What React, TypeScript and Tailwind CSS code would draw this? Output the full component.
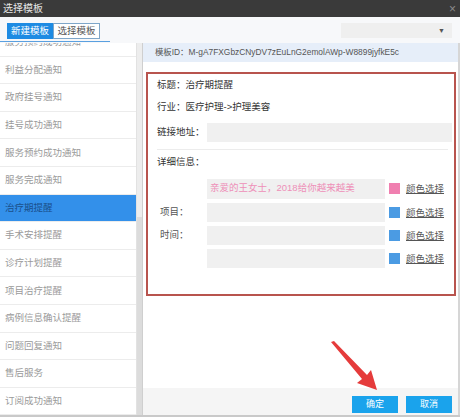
import React from 'react';

const items = [
  '服务预约成功通知',
  '利益分配通知',
  '政府挂号通知',
  '挂号成功通知',
  '服务预约成功通知',
  '服务完成通知',
  '治疗期提醒',
  '手术安排提醒',
  '诊疗计划提醒',
  '项目治疗提醒',
  '病例信息确认提醒',
  '问题回复通知',
  '售后服务',
  '订阅成功通知',
];

const ColorPick = ({ color }: { color: string }) => (
  <div className="flex items-center ml-[4px]">
    <div className={`w-[11px] h-[11px] ${color}`}></div>
    <span className="ml-[6px] text-[9.5px] text-[#555] underline leading-none">颜色选择</span>
  </div>
);

const App = () => {
  return (
    <div
      className="relative w-[460px] h-[417px] flex flex-col bg-white overflow-hidden"
      style={{ fontFamily: '"Liberation Sans", "Noto Sans CJK SC", sans-serif' }}
    >
      {/* title bar */}
      <div className="h-[17px] bg-[#3a3a3a] flex items-center justify-between pl-[3px] pr-[4px]">
        <span className="text-[10px] text-[#e6e6e6] leading-none">选择模板</span>
        <span className="text-[12px] text-[#8a8a8a] leading-none">×</span>
      </div>

      {/* tabs row */}
      <div className="h-[26px] bg-[#f7f8fa] flex items-start justify-between pl-[7px] pr-[8px] pt-[6px] relative">
        <div className="flex">
          <div className="w-[46px] h-[16px] bg-[#1e8be3] text-white text-[9.5px] flex items-center justify-center">新建模板</div>
          <div className="w-[47px] h-[16px] bg-white border border-[#7ea6c9] text-[#555] text-[9.5px] flex items-center justify-center">选择模板</div>
        </div>
        <div className="w-[111px] h-[15px] bg-[#efefef] flex items-center justify-end pr-[7px]">
          <span className="text-[7px] text-[#555] leading-none">▼</span>
        </div>
        <div className="absolute left-0 bottom-[1px] w-[110px] h-px bg-[#5aa0e0]"></div>
      </div>

      <div className="flex-1 flex min-h-0 border-b-2 border-[#c9c9c9]">
        {/* sidebar */}
        <div className="w-[143px] flex shrink-0">
          <div className="w-[137px] overflow-hidden border-r border-[#e2e2e2]">
            <div className="mt-[-14px]">
              {items.map((it, i) => (
                <div
                  key={i}
                  className={`h-[27.6px] flex items-center pl-[5px] text-[9.5px] border-b border-[#ececec] ${
                    it === '治疗期提醒' ? 'bg-[#3390ea] text-[#1a4f8a]' : 'text-[#9a9a9a]'
                  }`}
                >
                  {it}
                </div>
              ))}
            </div>
          </div>
          <div className="w-[6px] bg-[#ededed] border-r border-[#cfcfcf] flex flex-col">
            <div className="h-[174px]"></div>
            <div className="flex-1 bg-[#dcdcdc]"></div>
          </div>
        </div>

        {/* main */}
        <div className="flex-1 flex flex-col border-r-2 border-[#d6d6d6]">
          <div className="h-[19px] bg-[#e6eef9] flex items-center pl-[12px] text-[8.4px] text-[#555] whitespace-nowrap">
            模板ID：M-gA7FXGbzCNyDV7zEuLnG2emolAWp-W8899jyfkE5c
          </div>

          <div className="flex-1 pt-[10px] pl-[3px] pr-[2px]">
            <div className="h-[224px] border-2 border-[#b8544e] pl-[9px] pr-[2px]">
              <div className="h-[20px] mt-[1px] flex items-center text-[9.5px] text-[#333]">标题：治疗期提醒</div>
              <div className="h-[24px] flex items-center text-[9.5px] text-[#333]">行业：医疗护理-&gt;护理美容</div>
              <div className="h-[26px] flex items-center text-[9.5px] text-[#333]">
                <span className="w-[50px]">链接地址：</span>
                <div className="flex-1 h-[19px] bg-[#f0f0f0]"></div>
              </div>
              <div className="h-px bg-[#ececec] mt-[4px] mr-[4px]"></div>
              <div className="h-[24px] flex items-center text-[9.5px] text-[#333]">详细信息：</div>

              <div className="flex items-center mt-[4px] h-[21px]">
                <span className="w-[50px]"></span>
                <div className="w-[178px] h-[20px] bg-[#f0f0f0] flex items-center pl-[3px] text-[9.5px] text-[#ee8fb8] whitespace-nowrap">
                  亲爱的王女士，2018给你越来越美
                </div>
                <ColorPick color="bg-[#f07fb0]" />
              </div>
              <div className="flex items-center mt-[4px] h-[19px]">
                <span className="w-[50px] text-[9.5px] text-[#555] pl-[3px]">项目：</span>
                <div className="w-[178px] h-[19px] bg-[#f0f0f0]"></div>
                <ColorPick color="bg-[#4b9be3]" />
              </div>
              <div className="flex items-center mt-[4px] h-[19px]">
                <span className="w-[50px] text-[9.5px] text-[#555] pl-[3px]">时间：</span>
                <div className="w-[178px] h-[19px] bg-[#f0f0f0]"></div>
                <ColorPick color="bg-[#4b9be3]" />
              </div>
              <div className="flex items-center mt-[4px] h-[19px]">
                <span className="w-[50px]"></span>
                <div className="w-[178px] h-[19px] bg-[#f0f0f0]"></div>
                <ColorPick color="bg-[#4b9be3]" />
              </div>
            </div>
          </div>

          <div className="h-[27px] bg-[#f5f5f5] flex items-start justify-end pt-[8px] pr-[6px] gap-[8px]">
            <div className="w-[46px] h-[17px] bg-[#1aa3ec] text-white text-[9px] flex items-center justify-center">确定</div>
            <div className="w-[46px] h-[17px] bg-[#1aa3ec] text-white text-[9px] flex items-center justify-center">取消</div>
          </div>
        </div>
      </div>

      {/* red arrow annotation */}
      <svg className="absolute left-[325px] top-[338px]" width="60" height="58" viewBox="0 0 60 58">
        <polygon points="6,4 9,3 42,37 46,32 52,52 32,45 37,41" fill="#e53b3b" />
      </svg>
    </div>
  );
};

export default App;
